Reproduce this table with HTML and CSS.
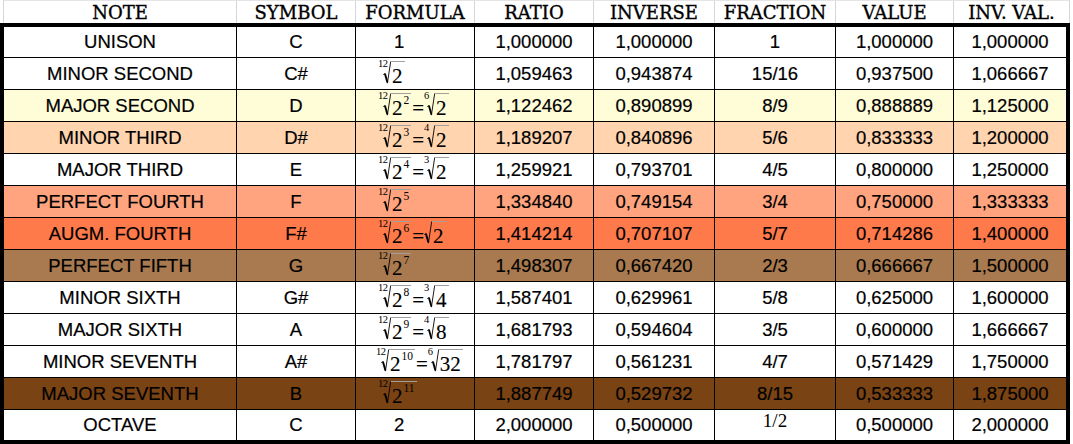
FILE: index.html
```html
<!DOCTYPE html>
<html>
<head>
<meta charset="utf-8">
<link rel="stylesheet" href="styles.css">
</head>
<body>
<svg width="0" height="0" class="defs" aria-hidden="true">
  <defs>
    <symbol id="rad" viewBox="0 0 8 23">
      <path d="M0.3 13.6 L1.9 12.6" fill="none" stroke="#000" stroke-width="0.9"/>
      <path d="M1.9 12.6 L4.4 21.6" fill="none" stroke="#000" stroke-width="1.9"/>
      <path d="M4.4 22.2 L7.7 0.5" fill="none" stroke="#000" stroke-width="0.9"/>
    </symbol>
  </defs>
</svg>
<div class="sheet">
  <div class="head">
    <div class="hc">NOTE</div>
    <div class="hc">SYMBOL</div>
    <div class="hc">FORMULA</div>
    <div class="hc">RATIO</div>
    <div class="hc">INVERSE</div>
    <div class="hc">FRACTION</div>
    <div class="hc">VALUE</div>
    <div class="hc">INV. VAL.</div>
  </div>
  <div class="body">
    <div class="row">
      <div class="c">UNISON</div><div class="c">C</div>
      <div class="c plain">1</div>
      <div class="c">1,000000</div><div class="c">1,000000</div><div class="c">1</div><div class="c">1,000000</div><div class="c">1,000000</div>
    </div>
    <div class="row">
      <div class="c">MINOR SECOND</div><div class="c">C#</div>
      <div class="c f"><span class="rt"><span class="ix">12</span><svg class="sg"><use href="#rad"/></svg><span class="rd">2</span></span></div>
      <div class="c">1,059463</div><div class="c">0,943874</div><div class="c">15/16</div><div class="c">0,937500</div><div class="c">1,066667</div>
    </div>
    <div class="row yellow">
      <div class="c">MAJOR SECOND</div><div class="c">D</div>
      <div class="c f"><span class="rt"><span class="ix">12</span><svg class="sg"><use href="#rad"/></svg><span class="rd">2<span class="ex">2</span></span></span><span class="eq">=</span><span class="rt one"><span class="ix">6</span><svg class="sg"><use href="#rad"/></svg><span class="rd">2</span></span></div>
      <div class="c">1,122462</div><div class="c">0,890899</div><div class="c">8/9</div><div class="c">0,888889</div><div class="c">1,125000</div>
    </div>
    <div class="row peach">
      <div class="c">MINOR THIRD</div><div class="c">D#</div>
      <div class="c f"><span class="rt"><span class="ix">12</span><svg class="sg"><use href="#rad"/></svg><span class="rd">2<span class="ex">3</span></span></span><span class="eq">=</span><span class="rt one"><span class="ix">4</span><svg class="sg"><use href="#rad"/></svg><span class="rd">2</span></span></div>
      <div class="c">1,189207</div><div class="c">0,840896</div><div class="c">5/6</div><div class="c">0,833333</div><div class="c">1,200000</div>
    </div>
    <div class="row">
      <div class="c">MAJOR THIRD</div><div class="c">E</div>
      <div class="c f"><span class="rt"><span class="ix">12</span><svg class="sg"><use href="#rad"/></svg><span class="rd">2<span class="ex">4</span></span></span><span class="eq">=</span><span class="rt one"><span class="ix">3</span><svg class="sg"><use href="#rad"/></svg><span class="rd">2</span></span></div>
      <div class="c">1,259921</div><div class="c">0,793701</div><div class="c">4/5</div><div class="c">0,800000</div><div class="c">1,250000</div>
    </div>
    <div class="row salmon">
      <div class="c">PERFECT FOURTH</div><div class="c">F</div>
      <div class="c f"><span class="rt"><span class="ix">12</span><svg class="sg"><use href="#rad"/></svg><span class="rd">2<span class="ex">5</span></span></span></div>
      <div class="c">1,334840</div><div class="c">0,749154</div><div class="c">3/4</div><div class="c">0,750000</div><div class="c">1,333333</div>
    </div>
    <div class="row orange">
      <div class="c">AUGM. FOURTH</div><div class="c">F#</div>
      <div class="c f"><span class="rt"><span class="ix">12</span><svg class="sg"><use href="#rad"/></svg><span class="rd">2<span class="ex">6</span></span></span><span class="eq">=</span><span class="rt none"><svg class="sg"><use href="#rad"/></svg><span class="rd">2</span></span></div>
      <div class="c">1,414214</div><div class="c">0,707107</div><div class="c">5/7</div><div class="c">0,714286</div><div class="c">1,400000</div>
    </div>
    <div class="row tan">
      <div class="c">PERFECT FIFTH</div><div class="c">G</div>
      <div class="c f"><span class="rt"><span class="ix">12</span><svg class="sg"><use href="#rad"/></svg><span class="rd">2<span class="ex">7</span></span></span></div>
      <div class="c">1,498307</div><div class="c">0,667420</div><div class="c">2/3</div><div class="c">0,666667</div><div class="c">1,500000</div>
    </div>
    <div class="row">
      <div class="c">MINOR SIXTH</div><div class="c">G#</div>
      <div class="c f"><span class="rt"><span class="ix">12</span><svg class="sg"><use href="#rad"/></svg><span class="rd">2<span class="ex">8</span></span></span><span class="eq">=</span><span class="rt one"><span class="ix">3</span><svg class="sg"><use href="#rad"/></svg><span class="rd">4</span></span></div>
      <div class="c">1,587401</div><div class="c">0,629961</div><div class="c">5/8</div><div class="c">0,625000</div><div class="c">1,600000</div>
    </div>
    <div class="row">
      <div class="c">MAJOR SIXTH</div><div class="c">A</div>
      <div class="c f"><span class="rt"><span class="ix">12</span><svg class="sg"><use href="#rad"/></svg><span class="rd">2<span class="ex">9</span></span></span><span class="eq">=</span><span class="rt one"><span class="ix">4</span><svg class="sg"><use href="#rad"/></svg><span class="rd">8</span></span></div>
      <div class="c">1,681793</div><div class="c">0,594604</div><div class="c">3/5</div><div class="c">0,600000</div><div class="c">1,666667</div>
    </div>
    <div class="row">
      <div class="c">MINOR SEVENTH</div><div class="c">A#</div>
      <div class="c f wide"><span class="rt"><span class="ix">12</span><svg class="sg"><use href="#rad"/></svg><span class="rd">2<span class="ex">10</span></span></span><span class="eq">=</span><span class="rt one"><span class="ix">6</span><svg class="sg"><use href="#rad"/></svg><span class="rd">32</span></span></div>
      <div class="c">1,781797</div><div class="c">0,561231</div><div class="c">4/7</div><div class="c">0,571429</div><div class="c">1,750000</div>
    </div>
    <div class="row brown">
      <div class="c">MAJOR SEVENTH</div><div class="c">B</div>
      <div class="c f"><span class="rt"><span class="ix">12</span><svg class="sg"><use href="#rad"/></svg><span class="rd">2<span class="ex">11</span></span></span></div>
      <div class="c">1,887749</div><div class="c">0,529732</div><div class="c">8/15</div><div class="c">0,533333</div><div class="c">1,875000</div>
    </div>
    <div class="row last">
      <div class="c">OCTAVE</div><div class="c">C</div>
      <div class="c plain">2</div>
      <div class="c">2,000000</div><div class="c">0,500000</div><div class="c half">1/2</div><div class="c">0,500000</div><div class="c">2,000000</div>
    </div>
  </div>
</div>
</body>
</html>
```
FILE: styles.css
```css
html, body {
  margin: 0;
  padding: 0;
  background: #ffffff;
}

.defs {
  position: absolute;
  width: 0;
  height: 0;
}

.sheet {
  width: 1073px;
  height: 444px;
  overflow: hidden;
}

.head {
  display: grid;
  grid-template-columns: 232px 118px 118px 118px 120px 120px 117px 115px;
  column-gap: 1px;
  width: max-content;
  height: 23px;
  margin-left: 3px;
  box-sizing: border-box;
  background: #d6d6d6;
  border-left: 1px solid #d6d6d6;
  border-right: 1px solid #d6d6d6;
  border-top: 1px solid #e4e4e4;
}

.hc {
  background: #ffffff;
  display: flex;
  align-items: center;
  justify-content: center;
  font-family: "DejaVu Serif", serif;
  font-size: 18px;
  color: #000;
  white-space: nowrap;
  padding-top: 1px;
  -webkit-text-stroke: 0.35px #000;
}

.body {
  width: 1070px;
  box-sizing: border-box;
  border: 4px solid #000;
  background: #000;
  display: flex;
  flex-direction: column;
  row-gap: 1px;
}

.row {
  --bg: #ffffff;
  display: grid;
  grid-template-columns: 232px 118px 118px 118px 120px 120px 117px 112px;
  column-gap: 1px;
  height: 31px;
}
.row:first-child, .row.last { height: 30px; }

.row.yellow { --bg: #fffcd8; }
.row.peach { --bg: #ffd4af; }
.row.salmon { --bg: #ffa47e; }
.row.orange { --bg: #ff7a4b; }
.row.tan { --bg: #a97a4f; }
.row.brown { --bg: #7a4314; }

.c {
  background: var(--bg);
  display: flex;
  align-items: center;
  justify-content: center;
  font-family: "Liberation Sans", Arial, sans-serif;
  font-size: 18.5px;
  color: #000;
  white-space: nowrap;
  overflow: hidden;
  -webkit-text-stroke: 0.2px #000;
}

.c.plain {
  justify-content: flex-start;
  padding-left: 38px;
}

.c.half {
  align-items: flex-start;
  font-family: "Liberation Serif", serif;
  font-size: 19px;
  line-height: 19px;
  padding-top: 1px;
  -webkit-text-stroke: 0;
}

.f {
  justify-content: flex-start;
  align-items: flex-end;
  padding-left: 22px;
  padding-bottom: 4px;
  font-family: "Liberation Serif", serif;
  box-sizing: border-box;
  -webkit-text-stroke: 0.15px #000;
}
.f.wide { padding-left: 20px; }

.rt {
  position: relative;
  display: inline-flex;
  align-items: flex-start;
  padding-left: 5px;
}
.rt.one { padding-left: 3px; }
.rt.none { padding-left: 0; }

.ix {
  position: absolute;
  left: 0;
  top: -2px;
  font-size: 10.5px;
  line-height: 10px;
  letter-spacing: -0.5px;
  -webkit-text-stroke: 0;
}

.sg {
  width: 8px;
  height: 23px;
  flex: none;
  display: block;
}

.rd {
  font-size: 21px;
  line-height: 18px;
  border-top: 1px solid #a0a0a0;
  padding: 5px 2px 0 1px;
  display: inline-flex;
  align-items: flex-start;
}

.ex {
  font-size: 11.5px;
  line-height: 11px;
  margin-left: 1px;
  margin-top: -4px;
  -webkit-text-stroke: 0;
}

.eq {
  font-size: 21px;
  line-height: 18px;
  margin: 0 0 0 1px;
  align-self: flex-end;
}
```
